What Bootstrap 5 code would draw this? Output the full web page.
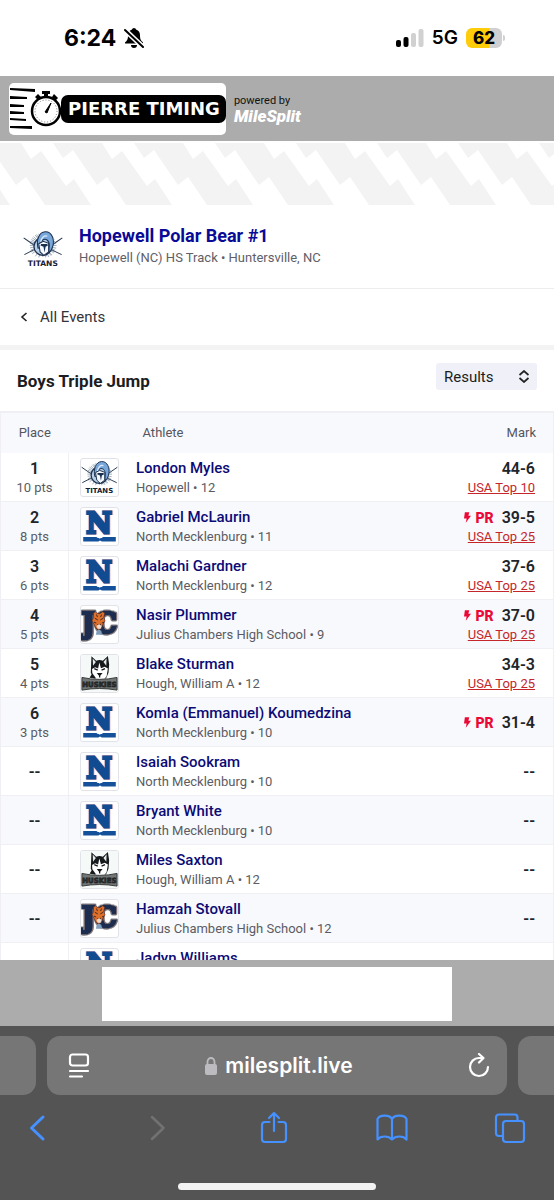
<!DOCTYPE html>
<html lang="en">
<head>
<meta charset="utf-8">
<meta name="viewport" content="width=device-width, initial-scale=1">
<title>Hopewell Polar Bear #1 - Boys Triple Jump</title>
<link href="https://cdn.jsdelivr.net/npm/bootstrap@5.3.0/dist/css/bootstrap.min.css" rel="stylesheet">
<style>
body { font-family: Roboto, sans-serif; color: #1c1d22; background: #fff; }
svg { display: block; flex: none; }
.ios { font-family: Inter, sans-serif; }

.status-bar { height: 76px; padding: 0 49px 0 64px; color: #000; }
.clock { font-size: 23px; line-height: 28px; font-weight: 700; }
.network { font-size: 19px; line-height: 24px; font-weight: 600; }
.battery { width: 36px; height: 20px; border-radius: 6px; font-size: 17px; line-height: 20px; font-weight: 800; background: linear-gradient(90deg, #ffcc0a 64%, #d0cfd1 64%); }
.battery-tip { width: 2px; height: 6px; margin-left: 1px; border-radius: 0 2px 2px 0; background: #d0cfd1; }

.brand-bar { height: 65px; padding: 0 9px; background: #acacac; }
.brand-logo { height: 52px; border-radius: 5px; color: #000; background: #fff; }
.brand-name { height: 28px; margin-left: -2px; padding: 0 6px 0 7px; border-radius: 7px; background: #000; color: #fff; font: 700 18px/28px "DejaVu Sans", sans-serif; }
.powered { font-size: 11px; line-height: 14px; color: #111; }
.milesplit { font-size: 17px; line-height: 16px; font-weight: 900; font-style: italic; color: #fff; }

.meet { height: 84px; padding: 0 23px; border-bottom: 1px solid #ededf0; }
.meet-title { font-size: 18px; line-height: 22px; font-weight: 700; color: #0a0a96; }
.meet-sub { font-size: 13px; line-height: 22px; color: #5f6067; }
.back-row { height: 61px; padding: 0 20px; border-bottom: 5px solid #f3f3f3; }
.back-link { font-size: 15px; line-height: 20px; color: #333439; }
.event-row { height: 61px; padding: 0 17px; }
.event-title { font-size: 17px; line-height: 22px; font-weight: 700; }
.view-picker { width: 101px; height: 27px; padding: 0 8px; border: 0; border-radius: 3px; background: #f0f1f8; appearance: none; font-size: 15px; line-height: 24px; color: #1c1d22; }
.picker-icon { position: absolute; right: 7px; top: 7px; pointer-events: none; }

.results { border: 1px solid #efeff4; border-top-width: 2px; }
.results th { height: 41px; padding: 0 17px; font-size: 13px; font-weight: 400; color: #55565d; background: #f8f9fd; border: 0; vertical-align: middle; }
.results td { padding: 5px 0 4px; border-bottom: 1px solid #efeff4; line-height: 20px; vertical-align: middle; background: #fff; }
.results tbody tr:nth-child(even) td { background: #f8f9fd; }
.results .c-place { width: 68px; border-right: 1px solid #efeff4; text-align: center; }
.results th.c-place { border-right: 0; padding: 0; }
.results th.c-athlete { padding-left: 74px; }
.results td.c-place, .mark-value { font-size: 16px; font-weight: 600; }
.results td.c-mark { padding-right: 18px; text-align: right; }
.small-line { display: block; font-size: 13px; line-height: 18px; font-weight: 400; color: #5b5c63; }
.athlete { display: block; font-size: 15px; line-height: 21px; font-weight: 500; color: #0c0b76; text-decoration: none; }
.crest { width: 39px; height: 39px; margin: 0 17px 0 11px; border: 1px solid #e2e3e8; border-radius: 3px; background: #fff; }
.rank-link { display: block; font-size: 13px; line-height: 18px; color: #c4262b; }
.pr { font-size: 14px; font-weight: 900; color: #ea0a38; }

.logo-titans { font: 700 22px "DejaVu Sans", sans-serif; fill: #162033; }
.logo-huskies { font: 700 22px "DejaVu Sans", sans-serif; fill: #303433; stroke: #1d201f; stroke-width: 2px; }
.logo-north { font: 700 88px "DejaVu Serif", serif; fill: #114b91; stroke: #114b91; stroke-width: 9px; filter: drop-shadow(1px 0 #d69cab) drop-shadow(-1px 0 #d69cab); }
.logo-chambers { font: 700 86px "DejaVu Serif", serif; fill: #1c2d50; stroke: #1c2d50; stroke-width: 9px; filter: drop-shadow(1px 0 #c9ab9b) drop-shadow(-1px 0 #c9ab9b) drop-shadow(0 1px #292b38) drop-shadow(0 -1px #292b38); }

.ad-bar { height: 66px; padding: 7px 0 5px; background: #acacac; }
.ad-slot { width: 350px; background: #fff; }

.browser { padding: 10px 0; background: #545454; color: #fff; }
.tab-side { width: 36px; height: 59px; background: #767676; }
.tab-left { border-radius: 0 13px 13px 0; }
.tab-right { border-radius: 13px 0 0 13px; }
.address { height: 59px; margin: 0 11px; padding: 0 17px 0 21px; border-radius: 13px; background: #767676; }
.host { font-size: 21px; line-height: 26px; font-weight: 600; }
.tools { height: 66px; padding: 0 28px 0 21px; color: #4591ff; }
.bare { padding: 0; border: 0; background: none; color: inherit; }
.home-line { width: 198px; height: 7px; margin-top: 22px; border-radius: 4px; background: #f2f2f2; }
</style>
</head>
<body>
<svg width="0" height="0" class="position-absolute" aria-hidden="true">
  <symbol id="titans" viewBox="0 0 117 117">
    <g stroke="#526986" stroke-width="1.6" fill="none">
      <path d="M58 12V82M46 14l24 66M36 18l46 60M27 26l63 44M22 36l72 26M20 48h78M22 62l72-26M27 72l63-46M36 80l46-64M46 83l24-68"/>
      <path d="M2 26l29 20M115 26L86 46M4 75l27-14M113 75L84 61" stroke="#25364f" stroke-width="3"/>
      <path d="M51 13l15 70M40 16l36 66M31 22l54 54M24 31l68 36M21 42l76 14M21 55l76-14M24 67l68-36"/>
    </g>
    <circle cx="58" cy="51" r="26" fill="#b8d0e8" stroke="#1e3351" stroke-width="4"/>
    <path d="M44 56C38 32 47 9 65 8c19-1 28 22 22 43-2 9-6 14-12 17l2-22C75 30 65 27 57 33c-7 5-9 13-7 22z" fill="#78a7dc" stroke="#1b304d" stroke-width="3"/>
    <path d="M52 38c2-13 10-20 19-17" fill="none" stroke="#dceafa" stroke-width="4"/>
    <path d="M46 43l13-7 16 6v25L61 77 50 67z" fill="#f5f9ff" stroke="#1b304d" stroke-width="3"/>
    <path d="M51 48l9 4 3 17 3-17 7-4-2-4H53z" fill="#19304f"/>
  </symbol>
  <symbol id="north" viewBox="0 0 117 117">
    <path d="M7 92h42l4 3h12l5-3h40v14H66l-6-3-5 3H7z" fill="#15509a"/>
    <path d="M54 88l5 8 6-5" fill="none" stroke="#fff" stroke-width="3"/>
  </symbol>
  <symbol id="chambers" viewBox="0 0 117 117">
    <path d="M39 23l6-5 8 6h7l9-6 6 5-3 13 4 11-7 12-4 11-9 6-9-6-5-11-7-12 5-11z" fill="#dc702c" stroke="#522b24" stroke-width="2"/>
    <path d="M44 39l9 5M70 39l-9 5M49 27l3 8M65 27l-3 8M41 51l7 3M73 51l-7 3M52 57l5 5 6-5" fill="none" stroke="#3c2525" stroke-width="3"/>
    <path d="M49 63l8-5 8 5-3 9h-9z" fill="#e8dcd4"/>
    <path d="M50 78l7-4 7 4 3 13H47z" fill="#7f9dbd"/>
  </symbol>
  <symbol id="huskies" viewBox="0 0 117 117">
    <rect width="117" height="117" fill="#f5faf8"/>
    <path d="M33 4l15 14c7-3 14-3 21 0L85 3l4 26-2 27-8 18H41L31 56l1-25z" fill="#171a1c"/>
    <path d="M37 11l10 11-9 12zM81 10L71 22l9 12z" fill="#e5e9e8"/>
    <path d="M58 24l5 18 12-5 10 6-4 24-8 10H45L36 61l-1-17 10-5 9 4z" fill="#fff"/>
    <path d="M42 43l11 5M76 43l-11 5M54 59h10l-5 6zM59 65v6" stroke="#171a1c" stroke-width="4" fill="#171a1c"/>
    <path d="M27 72l9-14 12 16z" fill="#171a1c"/>
    <path d="M3 71q55 12 111 0v40q-56-10-111 0z" fill="#737776" stroke="#343736" stroke-width="3"/>
  </symbol>
  <symbol id="bolt" viewBox="0 0 8 12"><path d="M1 0h5L5 4h3L2 12l1-5H0z" fill="#ea0a38"/></symbol>
</svg>

<div class="d-flex flex-column vh-100 overflow-hidden">
  <div class="status-bar ios d-flex justify-content-between align-items-center flex-shrink-0">
    <div class="d-flex align-items-center gap-2">
      <span class="clock">6:24</span>
      <svg width="20" height="21" viewBox="0 0 20 21"><path d="M10 0c1 0 2 1 2 1.600 3 1 4 3 4 6 0 4 1 5 3 7v1H1v-1c2-2 3-3 3-7 0-3 1-5 4-6C8 1 9 0 10 0z"/><path d="M7 17h6c0 2-1 3-3 3s-3-1-3-3z"/><path d="M0 1l20 19" stroke="#fff" stroke-width="5"/><path d="M1 2l18 17" stroke="#000" stroke-width="2" stroke-linecap="round"/></svg>
    </div>
    <div class="d-flex align-items-center">
      <svg width="28" height="18" viewBox="0 0 28 18"><rect y="11" width="5" height="7" rx="2"/><rect x="7.500" y="8" width="5" height="10" rx="2"/><rect x="15" y="4" width="5" height="14" rx="2" fill="#d1d1d1"/><rect x="22.500" width="5" height="18" rx="2" fill="#d1d1d1"/></svg>
      <span class="network ms-2">5G</span>
      <span class="battery ms-2 text-center">62</span><span class="battery-tip"></span>
    </div>
  </div>

  <header class="brand-bar d-flex align-items-center gap-2 flex-shrink-0">
    <div class="brand-logo d-flex align-items-center">
      <svg width="54" height="52" viewBox="0 0 54 52"><path d="M1 5l25 1v3L1 7zM1 13l17 1v2L1 16zM1 21l14 1v2L1 24zM1 28l14 1v2L1 31zM1 35l16 1v2L1 37zM1 43l22 0v3L1 45z"/><circle cx="37" cy="28" r="14" fill="#fff" stroke="#000" stroke-width="2.500"/><circle cx="37" cy="28" r="11" fill="none" stroke="#777" stroke-dasharray="1 2"/><path d="M33 8h8v3h-2v4h-4v-4h-2zM26 14l3-3 3 3-3 3zM45 11l4 4-3 3-3-4z"/><path d="M36 29l6-9-4 10z" stroke="#000"/></svg>
      <span class="brand-name">PIERRE TIMING</span>
    </div>
    <div>
      <div class="powered">powered by</div>
      <div class="milesplit">MileSplit</div>
    </div>
  </header>

  <svg class="w-100" height="64" aria-hidden="true">
    <defs>
      <pattern id="zigzag" width="81" height="64" patternUnits="userSpaceOnUse">
        <g fill="#f3f3f3">
          <path id="streak" d="M53 2H102L112 18 122 10 147 45 155 38 172 64H126L107 36 97 44 73 9 63 17Z"/>
          <use href="#streak" x="-81"/><use href="#streak" x="-162"/>
        </g>
      </pattern>
    </defs>
    <rect width="100%" height="64" fill="url(#zigzag)"/>
  </svg>

  <main class="flex-grow-1 overflow-hidden">
    <section class="meet d-flex align-items-center">
      <svg width="40" height="40" viewBox="0 0 117 117" class="me-3 mt-1"><use href="#titans"/><text class="logo-titans" x="58" y="109" text-anchor="middle">TITANS</text></svg>
      <div>
        <h1 class="meet-title m-0">Hopewell Polar Bear #1</h1>
        <div class="meet-sub">Hopewell (NC) HS Track • Huntersville, NC</div>
      </div>
    </section>
    <nav class="back-row d-flex align-items-center">
      <a href="#" class="back-link d-flex align-items-center text-decoration-none">
        <svg width="8" height="10" viewBox="0 0 8 10" class="me-2"><path d="M6.500 1L2 5l4.500 4" fill="none" stroke="#222" stroke-width="1.600"/></svg>
        <span class="ms-1">All Events</span>
      </a>
    </nav>
    <section class="event-row d-flex justify-content-between align-items-center">
      <h2 class="event-title m-0">Boys Triple Jump</h2>
      <div class="position-relative mb-2">
        <select class="view-picker" aria-label="View"><option>Results</option><option>Entries</option></select>
        <svg class="picker-icon" width="12" height="13" viewBox="0 0 12 13"><path d="M1.500 5L6 1l4.500 4M1.500 8L6 12l4.500-4" fill="none" stroke="#222" stroke-width="1.700"/></svg>
      </div>
    </section>

    <table class="results table m-0">
      <thead><tr><th class="c-place text-center">Place</th><th class="c-athlete">Athlete</th><th class="text-end">Mark</th></tr></thead>
      <tbody>
        <tr><td class="c-place">1<span class="small-line">10 pts</span></td>
          <td><div class="d-flex"><svg class="crest" viewBox="0 0 117 117"><use href="#titans"/><text class="logo-titans" x="58" y="109" text-anchor="middle">TITANS</text></svg><div><a href="#" class="athlete">London Myles</a><span class="small-line">Hopewell • 12</span></div></div></td>
          <td class="c-mark"><span class="mark-value">44-6</span><a href="#" class="rank-link">USA Top 10</a></td></tr>
        <tr><td class="c-place">2<span class="small-line">8 pts</span></td>
          <td><div class="d-flex"><svg class="crest" viewBox="0 0 117 117"><text class="logo-north" x="58" y="80" text-anchor="middle">N</text><use href="#north"/></svg><div><a href="#" class="athlete">Gabriel McLaurin</a><span class="small-line">North Mecklenburg • 11</span></div></div></td>
          <td class="c-mark"><div class="d-flex justify-content-end align-items-center"><svg width="7" height="11"><use href="#bolt"/></svg><span class="pr ms-1 me-2">PR</span><span class="mark-value">39-5</span></div><a href="#" class="rank-link">USA Top 25</a></td></tr>
        <tr><td class="c-place">3<span class="small-line">6 pts</span></td>
          <td><div class="d-flex"><svg class="crest" viewBox="0 0 117 117"><text class="logo-north" x="58" y="80" text-anchor="middle">N</text><use href="#north"/></svg><div><a href="#" class="athlete">Malachi Gardner</a><span class="small-line">North Mecklenburg • 12</span></div></div></td>
          <td class="c-mark"><span class="mark-value">37-6</span><a href="#" class="rank-link">USA Top 25</a></td></tr>
        <tr><td class="c-place">4<span class="small-line">5 pts</span></td>
          <td><div class="d-flex"><svg class="crest" viewBox="0 0 117 117"><text class="logo-chambers" x="58" y="86" text-anchor="middle">JC</text><use href="#chambers"/></svg><div><a href="#" class="athlete">Nasir Plummer</a><span class="small-line">Julius Chambers High School • 9</span></div></div></td>
          <td class="c-mark"><div class="d-flex justify-content-end align-items-center"><svg width="7" height="11"><use href="#bolt"/></svg><span class="pr ms-1 me-2">PR</span><span class="mark-value">37-0</span></div><a href="#" class="rank-link">USA Top 25</a></td></tr>
        <tr><td class="c-place">5<span class="small-line">4 pts</span></td>
          <td><div class="d-flex"><svg class="crest" viewBox="0 0 117 117"><use href="#huskies"/><text class="logo-huskies" x="58" y="102" text-anchor="middle">HUSKIES</text></svg><div><a href="#" class="athlete">Blake Sturman</a><span class="small-line">Hough, William A • 12</span></div></div></td>
          <td class="c-mark"><span class="mark-value">34-3</span><a href="#" class="rank-link">USA Top 25</a></td></tr>
        <tr><td class="c-place">6<span class="small-line">3 pts</span></td>
          <td><div class="d-flex"><svg class="crest" viewBox="0 0 117 117"><text class="logo-north" x="58" y="80" text-anchor="middle">N</text><use href="#north"/></svg><div><a href="#" class="athlete">Komla (Emmanuel) Koumedzina</a><span class="small-line">North Mecklenburg • 10</span></div></div></td>
          <td class="c-mark"><div class="d-flex justify-content-end align-items-center"><svg width="7" height="11"><use href="#bolt"/></svg><span class="pr ms-1 me-2">PR</span><span class="mark-value">31-4</span></div></td></tr>
        <tr><td class="c-place">--</td>
          <td><div class="d-flex"><svg class="crest" viewBox="0 0 117 117"><text class="logo-north" x="58" y="80" text-anchor="middle">N</text><use href="#north"/></svg><div><a href="#" class="athlete">Isaiah Sookram</a><span class="small-line">North Mecklenburg • 10</span></div></div></td>
          <td class="c-mark"><span class="mark-value">--</span></td></tr>
        <tr><td class="c-place">--</td>
          <td><div class="d-flex"><svg class="crest" viewBox="0 0 117 117"><text class="logo-north" x="58" y="80" text-anchor="middle">N</text><use href="#north"/></svg><div><a href="#" class="athlete">Bryant White</a><span class="small-line">North Mecklenburg • 10</span></div></div></td>
          <td class="c-mark"><span class="mark-value">--</span></td></tr>
        <tr><td class="c-place">--</td>
          <td><div class="d-flex"><svg class="crest" viewBox="0 0 117 117"><use href="#huskies"/><text class="logo-huskies" x="58" y="102" text-anchor="middle">HUSKIES</text></svg><div><a href="#" class="athlete">Miles Saxton</a><span class="small-line">Hough, William A • 12</span></div></div></td>
          <td class="c-mark"><span class="mark-value">--</span></td></tr>
        <tr><td class="c-place">--</td>
          <td><div class="d-flex"><svg class="crest" viewBox="0 0 117 117"><text class="logo-chambers" x="58" y="86" text-anchor="middle">JC</text><use href="#chambers"/></svg><div><a href="#" class="athlete">Hamzah Stovall</a><span class="small-line">Julius Chambers High School • 12</span></div></div></td>
          <td class="c-mark"><span class="mark-value">--</span></td></tr>
        <tr><td class="c-place"></td>
          <td><div class="d-flex"><svg class="crest" viewBox="0 0 117 117"><text class="logo-north" x="58" y="80" text-anchor="middle">N</text><use href="#north"/></svg><div><a href="#" class="athlete">Jadyn Williams</a></div></div></td>
          <td class="c-mark"></td></tr>
      </tbody>
    </table>
  </main>

  <aside class="ad-bar d-flex justify-content-center flex-shrink-0"><div class="ad-slot"></div></aside>

  <footer class="browser ios flex-shrink-0">
    <div class="d-flex">
      <div class="tab-side tab-left"></div>
      <div class="address flex-grow-1 d-flex align-items-center justify-content-between">
        <button class="bare" aria-label="Page menu"><svg width="22" height="25" viewBox="0 0 22 25" fill="none" stroke="#fff" stroke-width="2.200" stroke-linecap="round"><rect x="2" y="1.500" width="18" height="11" rx="2.500"/><path d="M2 18h18M2 23.500h12"/></svg></button>
        <div class="d-flex align-items-center gap-2">
          <svg width="12" height="18" viewBox="0 0 12 18"><rect y="7" width="12" height="11" rx="2" fill="#bcbbc0"/><path d="M2.500 8V5a3.500 4 0 0 1 7 0v3" fill="none" stroke="#bcbbc0" stroke-width="1.800"/></svg>
          <span class="host">milesplit.live</span>
        </div>
        <button class="bare" aria-label="Reload"><svg width="22" height="25" viewBox="0 0 22 25" fill="none" stroke="#fff" stroke-width="2.200" stroke-linecap="round" stroke-linejoin="round"><path d="M20 14a9 9 0 1 1-9-9h4M11 1l4.500 4L11 9.500"/></svg></button>
      </div>
      <div class="tab-side tab-right"></div>
    </div>
    <div class="tools d-flex justify-content-between align-items-center">
      <button class="bare" aria-label="Back"><svg width="32" height="34" viewBox="0 0 32 34" fill="none" stroke="currentColor" stroke-width="3" stroke-linecap="round" stroke-linejoin="round"><path d="M22 6L10.500 17 22 28"/></svg></button>
      <button class="bare" aria-label="Forward" disabled><svg width="32" height="34" viewBox="0 0 32 34" fill="none" stroke="#727272" stroke-width="2.500" stroke-linecap="round" stroke-linejoin="round"><path d="M13 6l11.500 11L13 28"/></svg></button>
      <button class="bare" aria-label="Share"><svg width="32" height="34" viewBox="0 0 32 34" fill="none" stroke="currentColor" stroke-width="2.200" stroke-linecap="round" stroke-linejoin="round"><path d="M11.500 11H7a3 3 0 0 0-3 3v14a3 3 0 0 0 3 3h18a3 3 0 0 0 3-3V14a3 3 0 0 0-3-3h-4.500M16 20V2M11 7l5-5 5 5"/></svg></button>
      <button class="bare" aria-label="Bookmarks"><svg width="32" height="34" viewBox="0 0 32 34" fill="none" stroke="currentColor" stroke-width="2.200" stroke-linejoin="round"><path d="M16 8C14 4 4 3 1.500 8v20.500c3-4 11-4 14.500 0 3.500-4 11.500-4 14.500 0V8C28 3 18 4 16 8zM16 8v20.500"/></svg></button>
      <button class="bare" aria-label="Tabs"><svg width="32" height="34" viewBox="0 0 32 34" fill="none" stroke="currentColor" stroke-width="2.200"><rect x="9" y="10" width="21" height="21" rx="3"/><path d="M9 25H5a3 3 0 0 1-3-3V6.500a3 3 0 0 1 3-3h15.500a3 3 0 0 1 3 3V10"/></svg></button>
    </div>
    <div class="home-line mx-auto"></div>
  </footer>
</div>
<script src="https://cdn.jsdelivr.net/npm/bootstrap@5.3.0/dist/js/bootstrap.bundle.min.js"></script>
</body>
</html>
